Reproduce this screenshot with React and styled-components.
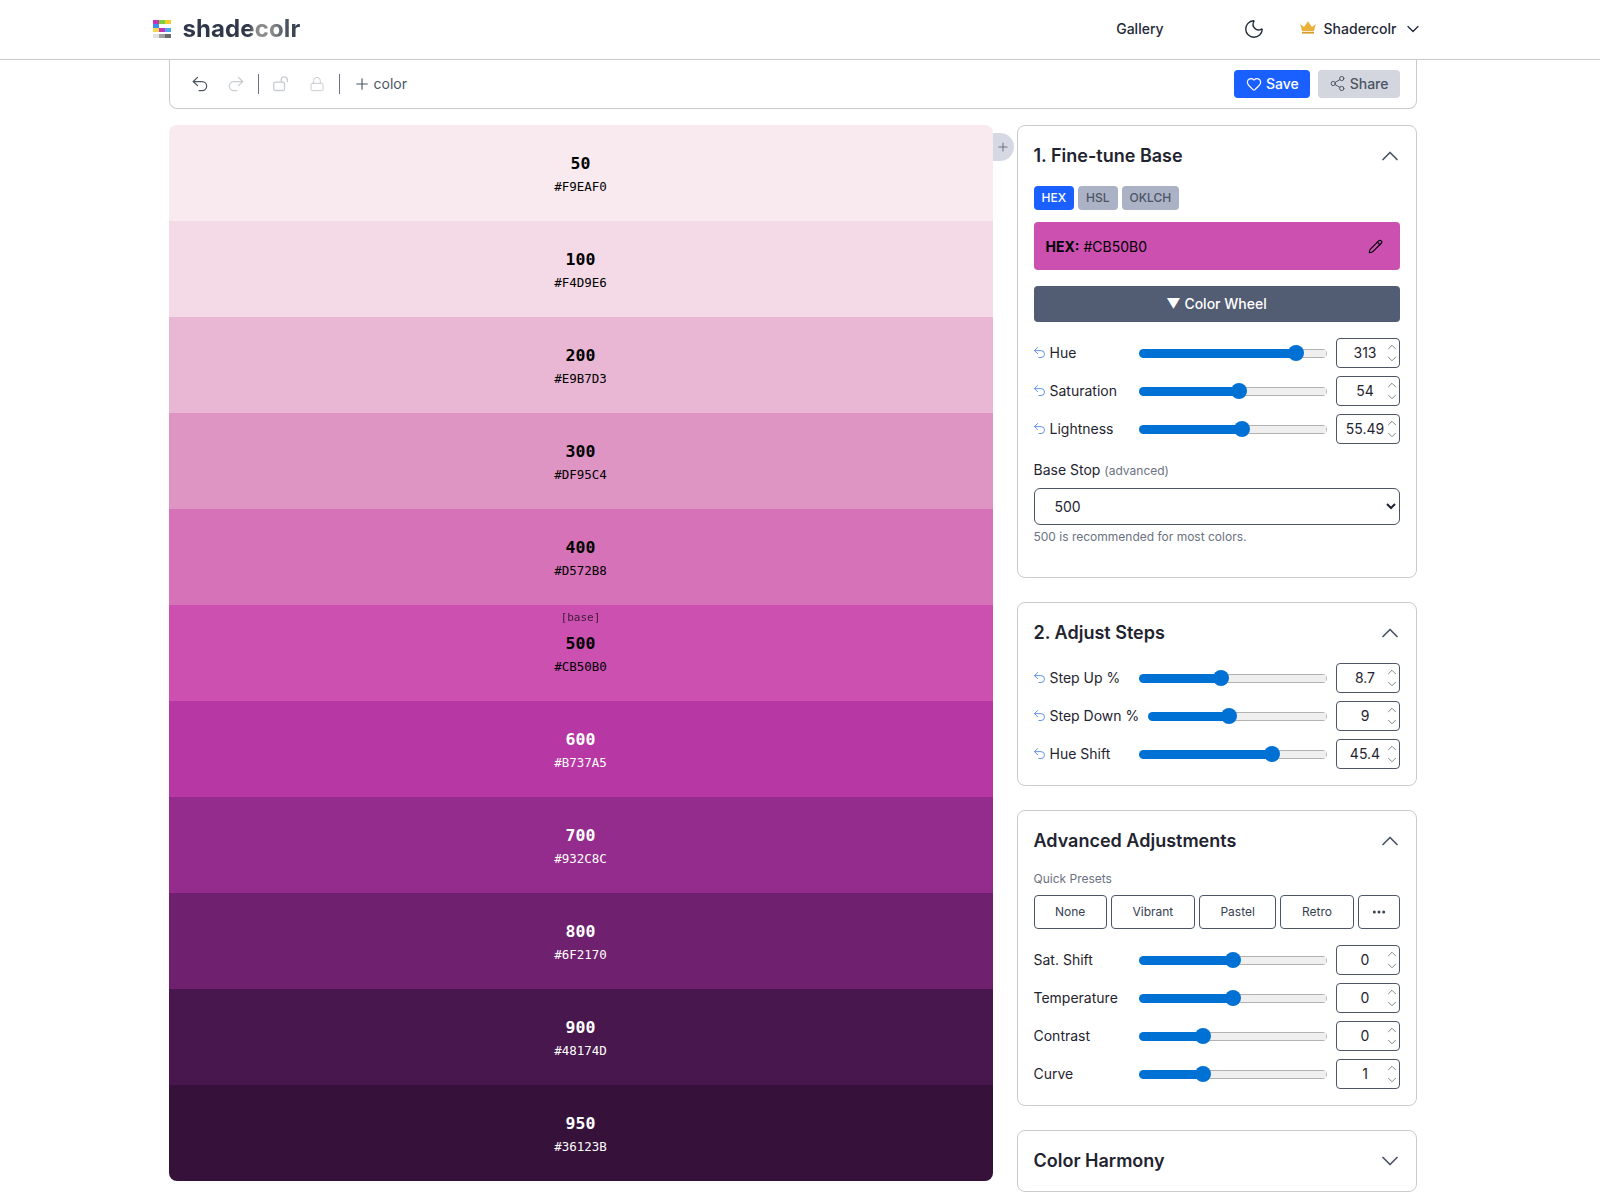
import React from "react";
import styled, { createGlobalStyle } from "styled-components";
import {
  Undo2, Redo2, Lock, Plus, Heart, Share2, Moon,
  ChevronDown, ChevronUp, Pencil, Ellipsis,
} from "lucide-react";

const Global = createGlobalStyle`
  html, body { margin: 0; padding: 0; background: #fff; }
  body { font-family: Inter, "Liberation Sans", sans-serif; color: #111827; font-size: 14px; }
  * { box-sizing: border-box; }
`;

const Header = styled.header`
  height: 60px; display: flex; align-items: center;
  padding: 0 177px 1px 153px; border-bottom: 1px solid #c9cbcf; background: #fff;
`;
const Brand = styled.div`display: flex; align-items: center; gap: 11.5px; margin-right: auto;`;
const BrandName = styled.span`
  font-size: 24px; font-weight: 700; line-height: 32px; letter-spacing: 0.1px;
  background: linear-gradient(90deg, #2f3748 0 56%, #8a8a8a 62% 76%, #4b5563 88%, #2f3748 100%);
  -webkit-background-clip: text; background-clip: text; color: transparent;
`;
const NavLink = styled.a`font-size: 14px; font-weight: 500; color: #1f2937; margin: 0 79.5px 2px 0;`;
const ThemeButton = styled.span`display: flex; color: #1f2937; margin-right: 34.5px;`;
const Account = styled.div`
  display: flex; align-items: center; font-size: 14px; font-weight: 500; color: #1f2937;
  gap: 8px;
  & > span { margin-bottom: 2px; }
  & > svg:first-child { margin-bottom: 4px; }
  & > svg:last-child { margin-left: -1.5px; }
`;

const Main = styled.main`width: 1248px; margin-left: 168.5px;`;
const Toolbar = styled.div`
  height: 49px; display: flex; align-items: center; padding: 0 16px 0 20px;
  border: 1px solid #c9cbcf; border-top: none; border-radius: 0 0 8px 8px; margin-bottom: 16px;
`;
const ToolIcon = styled.span`
  display: flex; width: 20px; justify-content: center; margin-right: ${p => p.$mr || 16}px;
  color: ${p => (p.$off ? "#c8ccd3" : "#4b5563")};
`;
const Sep = styled.span`width: 1px; height: 20px; background: #6b7280; margin-right: ${p => p.$mr || 12}px;`;
const AddColor = styled.span`
  display: flex; align-items: center; gap: 3px; font-size: 14px; color: #4b5563; margin-right: auto;
  padding-bottom: 1px;
`;
const ActionButton = styled.button`
  height: 28px; padding: 0 11px 1px ${p => (p.$primary ? 12 : 11)}px; display: flex; align-items: center;
  gap: 4px; border: none; border-radius: 4px; font: 500 14px Inter, sans-serif;
  margin-left: ${p => (p.$primary ? 0 : 8)}px;
  background: ${p => (p.$primary ? "#1a5fff" : "#d3d6df")};
  color: ${p => (p.$primary ? "#fff" : "#4b5563")};
`;

const Columns = styled.div`display: flex; gap: 24px; align-items: flex-start;`;
const SwatchColumn = styled.div`position: relative; width: 824px; flex-shrink: 0;`;
const SwatchStack = styled.div`border-radius: 8px; overflow: hidden;`;
const AddTab = styled.span`
  position: absolute; top: 8px; right: -21px; width: 21px; height: 28px; display: flex;
  align-items: center; justify-content: center; background: #d6d9e3; color: #6b7280;
  border-radius: 0 14px 14px 0;
`;
const Swatch = styled.div`
  position: relative; height: 96px; display: flex; flex-direction: column; align-items: center;
  padding-top: 27px; font-family: "DejaVu Sans Mono", "Liberation Mono", monospace;
  background: ${p => p.$bg}; color: ${p => p.$fg};
`;
const SwatchName = styled.div`font-size: 16.5px; font-weight: 700; line-height: 24px; margin-bottom: 3px;`;
const SwatchHex = styled.div`font-size: 12.5px; line-height: 16px;`;
const BaseTag = styled.div`position: absolute; top: 6px; font-size: 11px; line-height: 14px; opacity: 0.7;`;

const Side = styled.aside`width: 400px; display: flex; flex-direction: column; gap: 24px;`;
const Panel = styled.section`
  border: 1px solid #c9cbcf; border-radius: 8px; padding: 16px; background: #fff;
  padding-bottom: ${p => p.$pb ?? 16}px;
`;
const PanelHead = styled.div`
  height: 28px; display: flex; align-items: center; justify-content: space-between;
  margin-bottom: ${p => (p.$closed ? 0 : 16)}px;
`;
const PanelTitle = styled.h2`font-size: 18px; font-weight: 620; line-height: 28px; margin: 0; color: #1f2430;`;
const HeadIcon = styled.span`display: flex; color: #4b5563; margin-right: -4px;`;

const Tabs = styled.div`display: flex; gap: 4px; margin-bottom: 12px;`;
const Tab = styled.span`
  height: 24px; padding: 0 8px 2px; display: flex; align-items: center; border-radius: 4px;
  font-size: 12px; font-weight: 500;
  background: ${p => (p.$on ? "#1a5fff" : "#abb2c6")}; color: ${p => (p.$on ? "#fff" : "#4b5563")};
`;
const HexBar = styled.div`
  height: 48px; border-radius: 4px; background: #cb50b0; color: #000; padding: 0 17px 0 12px;
  display: flex; align-items: center; justify-content: space-between; margin-bottom: 16px; font-size: 14px;
  strong { font-weight: 700; }
`;
const WheelButton = styled.button`
  width: 100%; height: 36px; border: none; border-radius: 4px; background: #525c72; color: #fff;
  font: 500 14px Inter, sans-serif; margin-bottom: 16px; padding: 0 0 2px;
`;
const Rows = styled.div`display: flex; flex-direction: column; gap: 8px;`;
const Row = styled.div`height: 30px; display: flex; align-items: center; gap: 9px;`;
const RowLabel = styled.label`
  min-width: 96px; flex-shrink: 0; display: flex; align-items: center; gap: 4px;
  font-size: 14px; color: #1f2430; white-space: nowrap; padding-bottom: 2px;
`;
const ResetIcon = styled.span`display: flex; color: #5b8de8; margin: 0 -1.5px;`;
const Slider = styled.input`
  flex: 1; min-width: 0; height: 16px; margin: 0; appearance: none; background: transparent;
  --fill: calc(8px + (100% - 16px) * var(--frac));
  &::-webkit-slider-runnable-track {
    height: 9px; border-radius: 5px;
    background:
      linear-gradient(#0071d4, #0071d4) left / var(--fill) 100% no-repeat,
      linear-gradient(#efefef, #efefef) center / calc(100% - 2px) calc(100% - 2px) no-repeat,
      #b2b2b2;
  }
  &::-webkit-slider-thumb {
    appearance: none; width: 16px; height: 16px; border-radius: 50%;
    background: #0071d4; margin-top: -3.5px;
  }
`;
const NumberBox = styled.div`position: relative; width: 64px; height: 30px; flex-shrink: 0;`;
const NumberField = styled.input`
  width: 100%; height: 100%; border: 1px solid #4b5563; border-radius: 4px; background: #fff;
  padding: 0 5px 2px 0; text-align: center; font: 400 14px Inter, sans-serif; color: #1f2430; outline: none;
`;
const Spin = styled.span`
  position: absolute; right: 1px; top: 2px; display: flex; flex-direction: column; gap: 0; color: #6b7280;
  & > svg + svg { margin-top: -2px; }
`;
const BaseLabel = styled.div`
  margin-top: 16px; line-height: 20px; font-size: 14px; color: #1f2430; margin-bottom: 7px;
  small { font-size: 12px; color: #6b7280; }
`;
const StopSelect = styled.select`
  width: 100%; height: 37px; border: 1px solid #4b5563; border-radius: 6px; background: #fff;
  padding: 0 0 0 16px; font: 400 14px Inter, sans-serif; color: #1f2430;
`;
const Hint = styled.div`font-size: 12px; line-height: 16px; color: #6b7280; margin-top: 4px;`;
const PresetLabel = styled.div`font-size: 12px; line-height: 16px; color: #6b7280; margin-bottom: 8px;`;
const Presets = styled.div`display: flex; gap: 4px; margin-bottom: 16px;`;
const Preset = styled.button`
  flex: ${p => (p.$fixed ? "0 0 42px" : "1 1 auto")}; height: 34px; padding: 0 ${p => (p.$fixed ? 0 : 20)}px 1px;
  display: flex; align-items: center; justify-content: center;
  background: #fff; border: 1px solid #4b5563; border-radius: 4px;
  font: 400 12px Inter, sans-serif; color: #374151;
`;

const swatches = [
  ["50", "#F9EAF0", "#000"], ["100", "#F4D9E6", "#000"], ["200", "#E9B7D3", "#000"],
  ["300", "#DF95C4", "#000"], ["400", "#D572B8", "#000"], ["500", "#CB50B0", "#000", true],
  ["600", "#B737A5", "#fff"], ["700", "#932C8C", "#fff"], ["800", "#6F2170", "#fff"],
  ["900", "#48174D", "#fff"], ["950", "#36123B", "#fff"],
];

const Logo = () => (
  <svg width="18" height="18" viewBox="0 0 18 18" aria-hidden="true">
    <rect x="0" y="0" width="6" height="4" fill="#c832b4" />
    <rect x="6" y="0" width="6" height="4" fill="#7ccf3c" />
    <rect x="12" y="0" width="6" height="4" fill="#f2cf2f" />
    <rect x="0" y="4" width="6" height="4" fill="#3b8fe8" />
    <rect x="0" y="8" width="6" height="4" fill="#f2d84a" />
    <rect x="6" y="8" width="6" height="4" fill="#c832b4" />
    <rect x="12" y="8" width="6" height="4" fill="#46a8ee" />
    <rect x="0" y="14" width="6" height="4" fill="#e2e2e2" />
    <rect x="6" y="14" width="6" height="4" fill="#a0a0a0" />
    <rect x="12" y="14" width="6" height="4" fill="#6a6a6a" />
  </svg>
);

const Crown = () => (
  <svg width="16" height="13" viewBox="0 0 16 13" aria-hidden="true">
    <path d="M0.3 3 L4 6 L8 0.3 L12 6 L15.7 3 L14 10 H2 Z" fill="#eab13a" />
    <rect x="2" y="10.8" width="12" height="1.8" fill="#d89c2a" />
  </svg>
);

const OpenLock = () => (
  <svg width="20" height="20" viewBox="0 0 20 20" fill="none" stroke="currentColor" strokeWidth="1.3" strokeLinecap="round" strokeLinejoin="round" aria-hidden="true">
    <rect x="2.7" y="8.2" width="10.8" height="8.3" rx="1.6" />
    <path d="M10.2 8.2V6a3.1 3.1 0 0 1 6.2 0v1.5" />
  </svg>
);

const SliderRow = ({ label, reset, min, max, value }) => (
  <Row>
    <RowLabel>
      {reset && <ResetIcon><Undo2 size={15} strokeWidth={1.5} /></ResetIcon>}
      {label}
    </RowLabel>
    <Slider
      type="range" min={min} max={max} step="any" defaultValue={value}
      style={{ "--frac": (value - min) / (max - min) }}
    />
    <NumberBox>
      <NumberField type="text" readOnly defaultValue={value} />
      <Spin>
        <ChevronUp size={14} strokeWidth={1.5} />
        <ChevronDown size={14} strokeWidth={1.5} />
      </Spin>
    </NumberBox>
  </Row>
);

export default function App() {
  return (
    <>
      <Global />
      <Header>
        <Brand>
          <Logo />
          <BrandName>shadecolr</BrandName>
        </Brand>
        <NavLink>Gallery</NavLink>
        <ThemeButton><Moon size={22} strokeWidth={1.5} /></ThemeButton>
        <Account>
          <Crown />
          <span>Shadercolr</span>
          <ChevronDown size={20} strokeWidth={1.5} />
        </Account>
      </Header>
      <Main>
        <Toolbar>
          <ToolIcon><Undo2 size={20} strokeWidth={1.5} /></ToolIcon>
          <ToolIcon $off $mr={12}><Redo2 size={20} strokeWidth={1.5} /></ToolIcon>
          <Sep />
          <ToolIcon $off><OpenLock /></ToolIcon>
          <ToolIcon $off $mr={12}><Lock size={16} strokeWidth={1.5} /></ToolIcon>
          <Sep $mr={13} />
          <AddColor><Plus size={18} strokeWidth={1.5} />color</AddColor>
          <ActionButton $primary><Heart size={16} strokeWidth={1.75} />Save</ActionButton>
          <ActionButton><Share2 size={17} strokeWidth={1.4} />Share</ActionButton>
        </Toolbar>
        <Columns>
          <SwatchColumn>
            <SwatchStack>
              {swatches.map(([name, hex, fg, base]) => (
                <Swatch key={name} $bg={hex} $fg={fg}>
                  {base && <BaseTag>[base]</BaseTag>}
                  <SwatchName>{name}</SwatchName>
                  <SwatchHex>{hex}</SwatchHex>
                </Swatch>
              ))}
            </SwatchStack>
            <AddTab><Plus size={14} strokeWidth={1.75} /></AddTab>
          </SwatchColumn>
          <Side>
            <Panel $pb={32}>
              <PanelHead>
                <PanelTitle>1. Fine-tune Base</PanelTitle>
                <HeadIcon><ChevronUp size={28} strokeWidth={1.5} /></HeadIcon>
              </PanelHead>
              <Tabs>
                <Tab $on>HEX</Tab>
                <Tab>HSL</Tab>
                <Tab>OKLCH</Tab>
              </Tabs>
              <HexBar>
                <span><strong>HEX:</strong> #CB50B0</span>
                <Pencil size={15} strokeWidth={1.75} />
              </HexBar>
              <WheelButton>▼ Color Wheel</WheelButton>
              <Rows>
                <SliderRow reset label="Hue" min={0} max={360} value={313} />
                <SliderRow reset label="Saturation" min={0} max={100} value={54} />
                <SliderRow reset label="Lightness" min={0} max={100} value={55.49} />
              </Rows>
              <BaseLabel>Base Stop <small>(advanced)</small></BaseLabel>
              <StopSelect defaultValue="500">
                <option>400</option>
                <option>500</option>
                <option>600</option>
              </StopSelect>
              <Hint>500 is recommended for most colors.</Hint>
            </Panel>
            <Panel>
              <PanelHead>
                <PanelTitle>2. Adjust Steps</PanelTitle>
                <HeadIcon><ChevronUp size={28} strokeWidth={1.5} /></HeadIcon>
              </PanelHead>
              <Rows>
                <SliderRow reset label="Step Up %" min={0} max={20} value={8.7} />
                <SliderRow reset label="Step Down %" min={0} max={20} value={9} />
                <SliderRow reset label="Hue Shift" min={-100} max={100} value={45.4} />
              </Rows>
            </Panel>
            <Panel>
              <PanelHead>
                <PanelTitle>Advanced Adjustments</PanelTitle>
                <HeadIcon><ChevronUp size={28} strokeWidth={1.5} /></HeadIcon>
              </PanelHead>
              <PresetLabel>Quick Presets</PresetLabel>
              <Presets>
                <Preset>None</Preset>
                <Preset>Vibrant</Preset>
                <Preset>Pastel</Preset>
                <Preset>Retro</Preset>
                <Preset $fixed aria-label="More"><Ellipsis size={16} strokeWidth={2.5} /></Preset>
              </Presets>
              <Rows>
                <SliderRow label="Sat. Shift" min={-100} max={100} value={0} />
                <SliderRow label="Temperature" min={-100} max={100} value={0} />
                <SliderRow label="Contrast" min={-49} max={100} value={0} />
                <SliderRow label="Curve" min={0} max={3.05} value={1} />
              </Rows>
            </Panel>
            <Panel>
              <PanelHead $closed>
                <PanelTitle>Color Harmony</PanelTitle>
                <HeadIcon><ChevronDown size={28} strokeWidth={1.5} /></HeadIcon>
              </PanelHead>
            </Panel>
          </Side>
        </Columns>
      </Main>
    </>
  );
}
